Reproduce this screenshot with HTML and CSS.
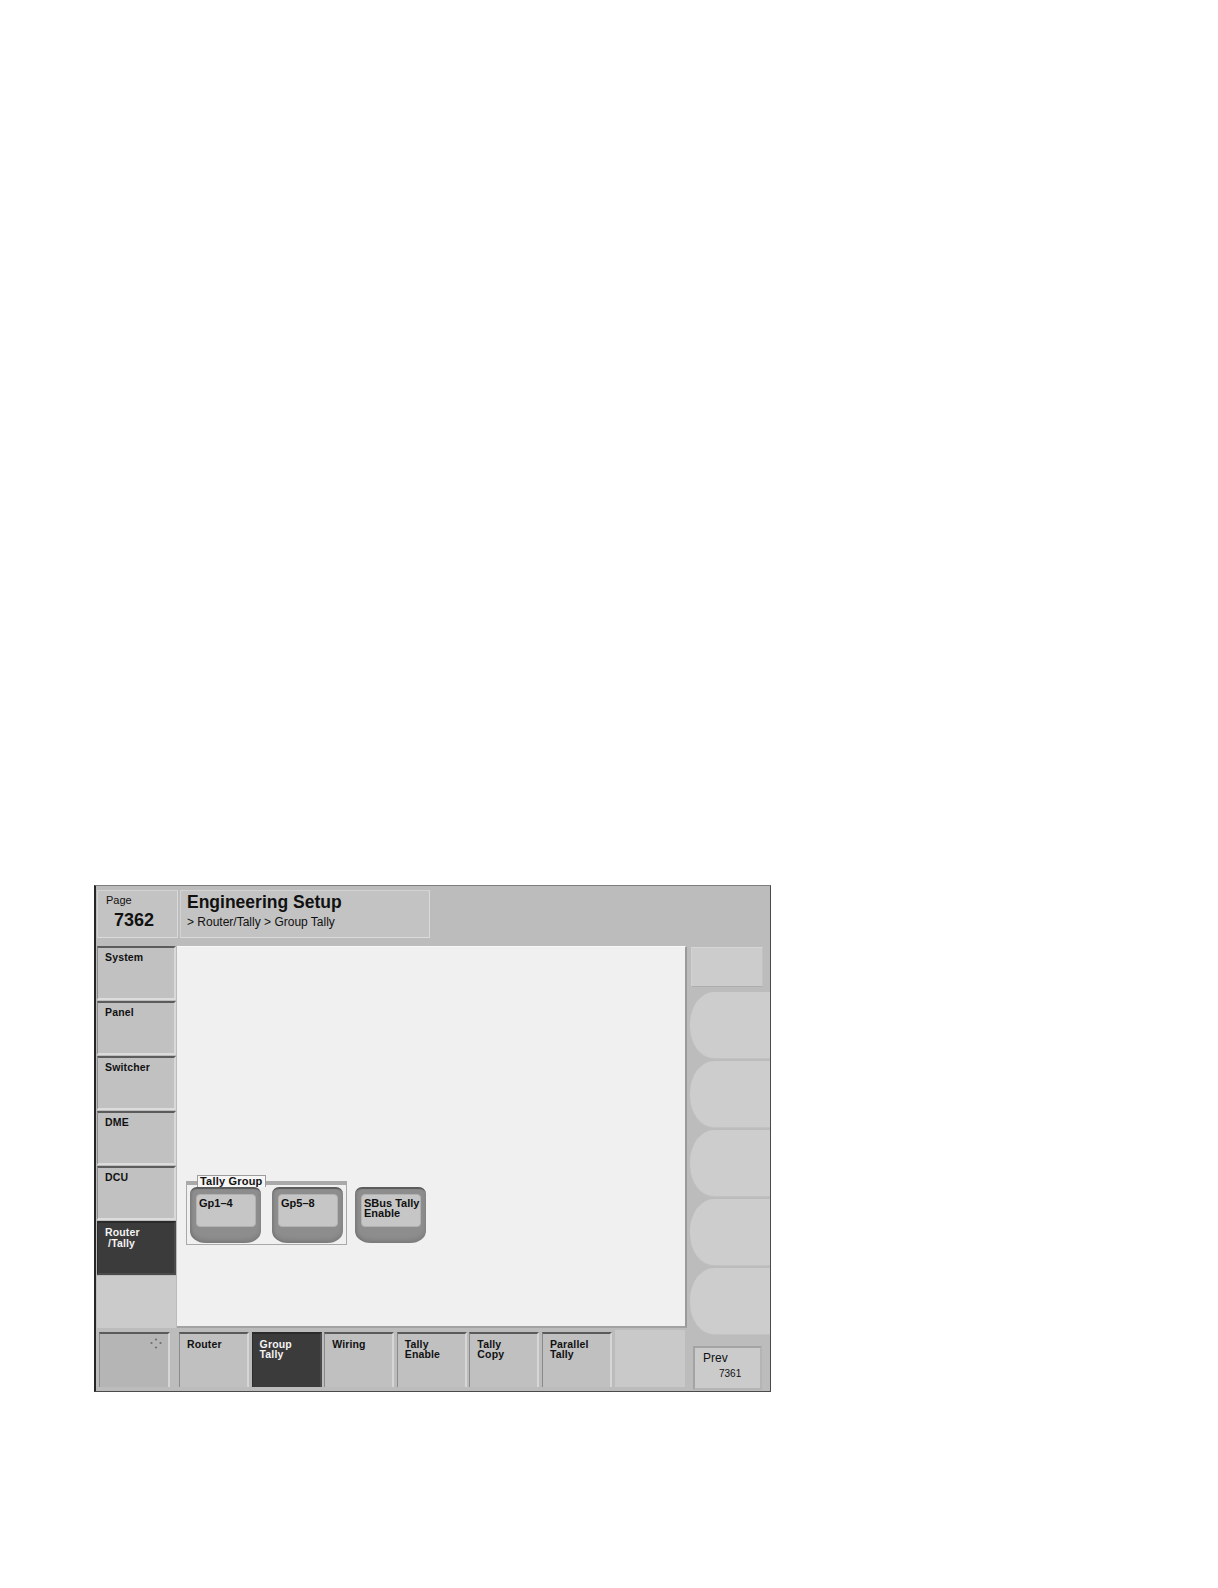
FILE: index.html
```html
<!DOCTYPE html>
<html>
<head>
<meta charset="utf-8">
<title>Engineering Setup</title>
<link rel="stylesheet" href="styles.css">
</head>
<body>
<div class="panel">
  <div class="header">
    <div class="pagebox">
      <div class="page-label">Page</div>
      <div class="page-num">7362</div>
    </div>
    <div class="titlebox">
      <div class="title">Engineering Setup</div>
      <div class="crumb">&gt; Router/Tally &gt; Group Tally</div>
    </div>
  </div>

  <div class="menu">
    <div class="mbtn">System</div>
    <div class="mbtn">Panel</div>
    <div class="mbtn">Switcher</div>
    <div class="mbtn">DME</div>
    <div class="mbtn">DCU</div>
    <div class="mbtn active">Router<br>&nbsp;/Tally</div>
    <div class="mspacer"></div>
  </div>

  <div class="content">
    <div class="row">
      <div class="group">
        <div class="group-label">Tally Group</div>
        <div class="key"><div class="key-face">Gp1–4</div></div>
        <div class="key"><div class="key-face">Gp5–8</div></div>
      </div>
      <div class="key solo"><div class="key-face">SBus Tally<br>Enable</div></div>
    </div>
  </div>

  <div class="side">
    <div class="side-top"></div>
    <div class="side-btn"></div>
    <div class="side-btn"></div>
    <div class="side-btn"></div>
    <div class="side-btn"></div>
    <div class="side-btn"></div>
    <div class="prev">
      <div class="prev-label">Prev</div>
      <div class="prev-num">7361</div>
    </div>
  </div>

  <div class="bottom">
    <div class="bbtn first">
      <svg class="dots" width="12" height="12" viewBox="0 0 12 12">
        <circle cx="6" cy="1.5" r="1.1" fill="#6e6e6e"/>
        <circle cx="1.5" cy="5" r="1.1" fill="#6e6e6e"/>
        <circle cx="10.5" cy="5" r="1.1" fill="#6e6e6e"/>
        <circle cx="6" cy="9.5" r="1.1" fill="#6e6e6e"/>
      </svg>
    </div>
    <div class="bbtn">Router</div>
    <div class="bbtn active">Group<br>Tally</div>
    <div class="bbtn">Wiring</div>
    <div class="bbtn">Tally<br>Enable</div>
    <div class="bbtn">Tally<br>Copy</div>
    <div class="bbtn">Parallel<br>Tally</div>
    <div class="bbtn blank"></div>
  </div>
</div>
</body>
</html>
```

FILE: styles.css
```css
* { box-sizing: border-box; }
html, body { margin: 0; padding: 0; background: #ffffff; }
body {
  width: 1218px;
  height: 1588px;
  overflow: hidden;
  font-family: "Liberation Sans", Arial, sans-serif;
  color: #111;
}

.panel {
  margin: 885px 0 0 94px;
  width: 677px;
  height: 507px;
  background: #bcbcbc;
  border-top: 1px solid #7e7e7e;
  border-left: 2px solid #262626;
  border-right: 1px solid #4a4a4a;
  border-bottom: 1px solid #4a4a4a;
  display: grid;
  grid-template-columns: 81px 510px 83px;
  grid-template-rows: 60px 382px 63px;
}

/* header */
.header {
  grid-column: 1 / 4;
  grid-row: 1;
  display: flex;
  gap: 2px;
  padding: 4px 0 0 1px;
}
.pagebox, .titlebox {
  height: 48px;
  background: #c3c3c3;
  border: 1px solid #d3d3d3;
  border-right-color: #dadada;
  border-bottom-color: #dadada;
}
.pagebox { width: 81px; padding: 3px 0 0 8px; }
.titlebox { width: 250px; padding: 0 0 0 6px; }
.page-label { font-size: 11px; line-height: 13px; }
.page-num {
  font-size: 18px; line-height: 20px; font-weight: bold;
  margin: 3px 0 0 8px;
}
.title {
  font-size: 17.5px; line-height: 20px; font-weight: bold;
  padding-top: 0.5px;
}
.crumb { font-size: 12px; line-height: 14px; margin-top: 3px; }

/* left menu */
.menu {
  grid-column: 1;
  grid-row: 2;
  padding-left: 1px;
  display: flex;
  flex-direction: column;
}
.mbtn {
  width: 79px;
  height: 54px;
  margin-bottom: 1px;
  background: #c1c1c1;
  border-top: 2px solid #5c5c5c;
  border-left: 1px solid #8a8a8a;
  border-right: 2px solid #d9d9d9;
  border-bottom: 2px solid #dcdcdc;
  padding: 4px 0 0 7px;
  font-size: 10.5px;
  line-height: 10.5px;
  font-weight: bold;
  letter-spacing: 0.15px;
}
.mbtn.active {
  background: #3b3b3b;
  color: #f4f4f4;
  border-top-color: #2a2a2a;
  border-left-color: #2e2e2e;
  border-right-color: #4a4a4a;
  border-bottom-color: #4a4a4a;
}
.mspacer {
  width: 79px;
  flex: 1;
  background: #cbcbcb;
}

/* content */
.content {
  grid-column: 2;
  grid-row: 2;
  background: #f0f0f0;
  border-top: 1px solid #f7f7f7;
  border-right: 2px solid #9a9a9a;
  border-bottom: 2px solid #a2a2a2;
  padding: 234px 0 0 9px;
}
.row { display: flex; align-items: flex-start; }
.group {
  position: relative;
  display: flex;
  gap: 11px;
  width: 161px;
  height: 64px;
  border: 1px solid #a9a9a9;
  border-top: 4px solid #a9a9a9;
  padding: 2px 3px 0 3px;
}
.group-label {
  position: absolute;
  left: 10px;
  top: -10px;
  height: 12px;
  padding: 0 2px;
  background: #f6f6f6;
  border: 1px solid #9c9c9c;
  border-bottom: none;
  font-size: 11px;
  line-height: 11px;
  font-weight: bold;
  letter-spacing: 0.2px;
  white-space: nowrap;
  color: #111;
}
.key {
  width: 71px;
  height: 56px;
  background: #8d8d8d;
  border-top: 2px solid #5c5c5c;
  border-radius: 7px 7px 16px 16px / 7px 7px 12px 12px;
  padding: 5px 5px 0 6px;
  box-shadow: inset 0 -3px 4px rgba(0,0,0,0.12), inset 2px 0 2px rgba(0,0,0,0.08);
}
.key.solo { margin: 6px 0 0 8px; }
.key-face {
  height: 33px;
  background: #c6c6c6;
  border: 1px solid #b2b2b2;
  border-radius: 4px;
  padding: 3px 0 0 2px;
  font-size: 11px;
  line-height: 10px;
  font-weight: bold;
  white-space: nowrap;
  overflow: visible;
}

/* right column */
.side {
  grid-column: 3;
  grid-row: 2 / 4;
  padding-top: 1px;
  display: flex;
  flex-direction: column;
}
.side-top {
  width: 72px;
  height: 40px;
  margin: 0 0 5px 4px;
  background: #cccccc;
  border-top: 1px solid #d6d6d6;
  border-left: 1px solid #d2d2d2;
  border-right: 1px solid #c2c2c2;
  border-bottom: 1px solid #adadad;
}
.side-btn {
  width: 80px;
  height: 67px;
  margin: 0 0 2px 3px;
  background: #cdcdcd;
  border-radius: 24px 0 0 24px / 32px 0 0 32px;
  border-bottom: 1px solid #c2c2c2;
}
.prev {
  width: 69px;
  height: 44px;
  margin: 9px 0 0 6px;
  background: #cbcbcb;
  border: 2px solid #a3a3a3;
  border-right-color: #b4b4b4;
  border-bottom-color: #b4b4b4;
  padding: 3px 0 0 8px;
}
.prev-label { font-size: 12px; line-height: 14px; }
.prev-num { font-size: 10px; line-height: 12px; margin: 3px 0 0 16px; }

/* bottom bar */
.bottom {
  grid-column: 1 / 3;
  grid-row: 3;
  display: flex;
  align-items: flex-start;
  gap: 2.6px;
  padding: 4px 0 0 3px;
}
.bbtn {
  width: 70px;
  height: 55px;
  background: #c0c0c0;
  border-top: 2px solid #5a5a5a;
  border-left: 1px solid #8a8a8a;
  border-right: 2px solid #d6d6d6;
  padding: 4.5px 0 0 7px;
  font-size: 10.5px;
  line-height: 10.5px;
  font-weight: bold;
  letter-spacing: 0.15px;
}
.bbtn.first {
  width: 71px;
  margin-right: 6.4px;
  background: #b5b5b5;
  display: flex;
  justify-content: flex-end;
  padding: 4px 6px 0 0;
}
.dots { display: block; }
.bbtn.active {
  background: #3b3b3b;
  color: #f4f4f4;
  border-top-color: #2a2a2a;
  border-left-color: #2e2e2e;
  border-right-color: #4a4a4a;
}
.bbtn.blank {
  background: #c9c9c9;
  border: none;
  margin-top: -2px;
  height: 57px;
}
```
